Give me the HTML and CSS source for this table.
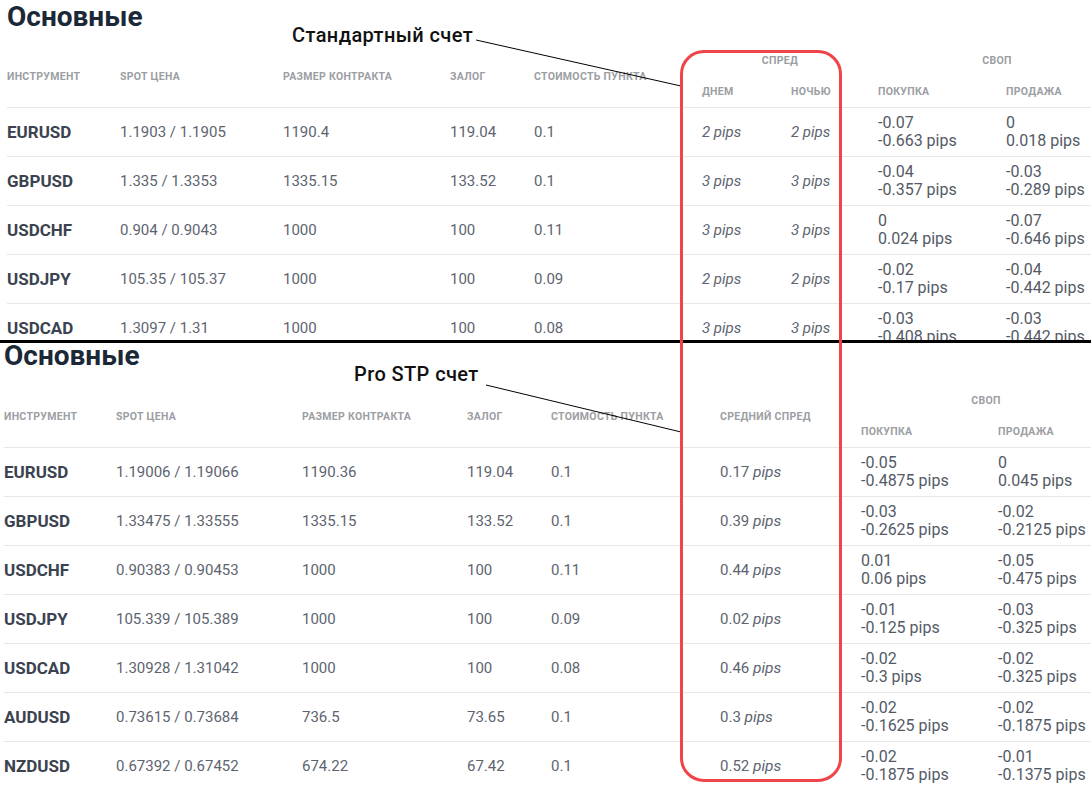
FILE: index.html
```html
<!DOCTYPE html>
<html lang="ru">
<head>
<meta charset="utf-8">
<title>Основные</title>
<link rel="stylesheet" href="styles.css">
</head>
<body>
<div class="page">
  <section class="block block--std">
    <h2 class="title">Основные</h2>
    <table class="rates rates--std">
      <colgroup>
        <col class="w113"><col class="w163"><col class="w167"><col class="w84"><col class="w168"><col class="w89"><col class="w87"><col class="w128"><col class="w130">
      </colgroup>
      <thead>
        <tr>
          <th rowspan="2">Инструмент</th>
          <th rowspan="2">Spot цена</th>
          <th rowspan="2">Размер контракта</th>
          <th rowspan="2">Залог</th>
          <th rowspan="2">Стоимость пункта</th>
          <th colspan="2" class="grp">Спред</th>
          <th colspan="2" class="grp">Своп</th>
        </tr>
        <tr>
          <th>Днем</th><th>Ночью</th><th>Покупка</th><th>Продажа</th>
        </tr>
      </thead>
      <tbody>
        <tr><td class="sym">EURUSD</td><td>1.1903 / 1.1905</td><td>1190.4</td><td>119.04</td><td>0.1</td><td class="sp">2 pips</td><td class="sp">2 pips</td><td class="swap">-0.07<br>-0.663 pips</td><td class="swap">0<br>0.018 pips</td></tr>
        <tr><td class="sym">GBPUSD</td><td>1.335 / 1.3353</td><td>1335.15</td><td>133.52</td><td>0.1</td><td class="sp">3 pips</td><td class="sp">3 pips</td><td class="swap">-0.04<br>-0.357 pips</td><td class="swap">-0.03<br>-0.289 pips</td></tr>
        <tr><td class="sym">USDCHF</td><td>0.904 / 0.9043</td><td>1000</td><td>100</td><td>0.11</td><td class="sp">3 pips</td><td class="sp">3 pips</td><td class="swap">0<br>0.024 pips</td><td class="swap">-0.07<br>-0.646 pips</td></tr>
        <tr><td class="sym">USDJPY</td><td>105.35 / 105.37</td><td>1000</td><td>100</td><td>0.09</td><td class="sp">2 pips</td><td class="sp">2 pips</td><td class="swap">-0.02<br>-0.17 pips</td><td class="swap">-0.04<br>-0.442 pips</td></tr>
        <tr><td class="sym">USDCAD</td><td>1.3097 / 1.31</td><td>1000</td><td>100</td><td>0.08</td><td class="sp">3 pips</td><td class="sp">3 pips</td><td class="swap">-0.03<br>-0.408 pips</td><td class="swap">-0.03<br>-0.442 pips</td></tr>
      </tbody>
    </table>
  </section>

  <div class="divider"></div>

  <section class="block block--pro">
    <h2 class="title title--pro">Основные</h2>
    <table class="rates rates--pro">
      <colgroup>
        <col class="w112"><col class="w186"><col class="w165"><col class="w84"><col class="w169"><col class="w141"><col class="w137"><col class="w133">
      </colgroup>
      <thead>
        <tr>
          <th rowspan="2">Инструмент</th>
          <th rowspan="2">Spot цена</th>
          <th rowspan="2">Размер контракта</th>
          <th rowspan="2">Залог</th>
          <th rowspan="2">Стоимость пункта</th>
          <th rowspan="2">Средний спред</th>
          <th colspan="2" class="grp">Своп</th>
        </tr>
        <tr>
          <th>Покупка</th><th>Продажа</th>
        </tr>
      </thead>
      <tbody>
        <tr><td class="sym">EURUSD</td><td>1.19006 / 1.19066</td><td>1190.36</td><td>119.04</td><td>0.1</td><td>0.17 <i>pips</i></td><td class="swap">-0.05<br>-0.4875 pips</td><td class="swap">0<br>0.045 pips</td></tr>
        <tr><td class="sym">GBPUSD</td><td>1.33475 / 1.33555</td><td>1335.15</td><td>133.52</td><td>0.1</td><td>0.39 <i>pips</i></td><td class="swap">-0.03<br>-0.2625 pips</td><td class="swap">-0.02<br>-0.2125 pips</td></tr>
        <tr><td class="sym">USDCHF</td><td>0.90383 / 0.90453</td><td>1000</td><td>100</td><td>0.11</td><td>0.44 <i>pips</i></td><td class="swap">0.01<br>0.06 pips</td><td class="swap">-0.05<br>-0.475 pips</td></tr>
        <tr><td class="sym">USDJPY</td><td>105.339 / 105.389</td><td>1000</td><td>100</td><td>0.09</td><td>0.02 <i>pips</i></td><td class="swap">-0.01<br>-0.125 pips</td><td class="swap">-0.03<br>-0.325 pips</td></tr>
        <tr><td class="sym">USDCAD</td><td>1.30928 / 1.31042</td><td>1000</td><td>100</td><td>0.08</td><td>0.46 <i>pips</i></td><td class="swap">-0.02<br>-0.3 pips</td><td class="swap">-0.02<br>-0.325 pips</td></tr>
        <tr><td class="sym">AUDUSD</td><td>0.73615 / 0.73684</td><td>736.5</td><td>73.65</td><td>0.1</td><td>0.3 <i>pips</i></td><td class="swap">-0.02<br>-0.1625 pips</td><td class="swap">-0.02<br>-0.1875 pips</td></tr>
        <tr><td class="sym">NZDUSD</td><td>0.67392 / 0.67452</td><td>674.22</td><td>67.42</td><td>0.1</td><td>0.52 <i>pips</i></td><td class="swap">-0.02<br>-0.1875 pips</td><td class="swap">-0.01<br>-0.1375 pips</td></tr>
      </tbody>
    </table>
  </section>

  <svg class="arrows" width="1091" height="790" viewBox="0 0 1091 790" aria-hidden="true">
    <line x1="476" y1="40" x2="681" y2="86" stroke="#000" stroke-width="1"/>
    <line x1="486" y1="385" x2="681" y2="432" stroke="#000" stroke-width="1"/>
  </svg>
  <div class="note note--std">Стандартный счет</div>
  <div class="note note--pro">Pro STP счет</div>
  <div class="highlight"></div>
</div>
</body>
</html>
```

FILE: styles.css
```css
html, body {
  margin: 0;
  padding: 0;
  background: #fff;
}

.page {
  position: relative;
  width: 1091px;
  height: 790px;
  overflow: hidden;
  font-family: Roboto, "Noto Sans", sans-serif;
}

.block--std {
  height: 340px;
  overflow: hidden;
}

.divider {
  height: 3px;
  background: #000;
}

.title {
  margin: 1px 0 0 7px;
  font-size: 28px;
  line-height: 32px;
  font-weight: 700;
  color: #1b2837;
}

.title--pro {
  margin: 0 0 0 4px;
  line-height: 26px;
}

.rates {
  border-collapse: collapse;
  table-layout: fixed;
  margin-top: 12px;
}

.rates--std {
  width: 1129px;
  margin-left: 7px;
}

.rates--pro {
  width: 1127px;
  margin-left: 4px;
  margin-top: 16px;
}

.w84 { width: 84px; }
.w87 { width: 87px; }
.w89 { width: 89px; }
.w112 { width: 112px; }
.w113 { width: 113px; }
.w128 { width: 128px; }
.w130 { width: 130px; }
.w133 { width: 133px; }
.w137 { width: 137px; }
.w141 { width: 141px; }
.w163 { width: 163px; }
.w165 { width: 165px; }
.w167 { width: 167px; }
.w168 { width: 168px; }
.w169 { width: 169px; }
.w186 { width: 186px; }

.rates th {
  height: 31px;
  padding: 0 20px 0 0;
  text-align: left;
  vertical-align: middle;
  font-size: 10.5px;
  font-weight: 700;
  letter-spacing: 0.3px;
  text-transform: uppercase;
  color: #9b9ea3;
  white-space: nowrap;
}

.rates th.grp {
  text-align: center;
}

.rates td {
  height: 48px;
  padding: 0 20px 0 0;
  border-top: 1px solid #e7e7e7;
  vertical-align: middle;
  font-size: 15px;
  color: #5d6470;
  white-space: nowrap;
}

.rates td.sym {
  font-size: 17px;
  font-weight: 700;
  color: #3b4250;
}

.rates td.sp {
  font-style: italic;
}

.rates td i {
  font-size: 15.5px;
}

.rates td.swap {
  font-size: 16px;
  line-height: 18px;
  color: #535a66;
}

.arrows {
  position: absolute;
  left: 0;
  top: 0;
  pointer-events: none;
}

.note {
  position: absolute;
  font-size: 20px;
  line-height: 20px;
  font-weight: 500;
  letter-spacing: 0.4px;
  color: #111;
  white-space: nowrap;
}

.note--std {
  left: 292px;
  top: 25px;
}

.note--pro {
  left: 354px;
  top: 364px;
}

.highlight {
  position: absolute;
  left: 680px;
  top: 50px;
  width: 162px;
  height: 732px;
  box-sizing: border-box;
  border: 3px solid #f04448;
  border-radius: 24px;
  pointer-events: none;
}
```
